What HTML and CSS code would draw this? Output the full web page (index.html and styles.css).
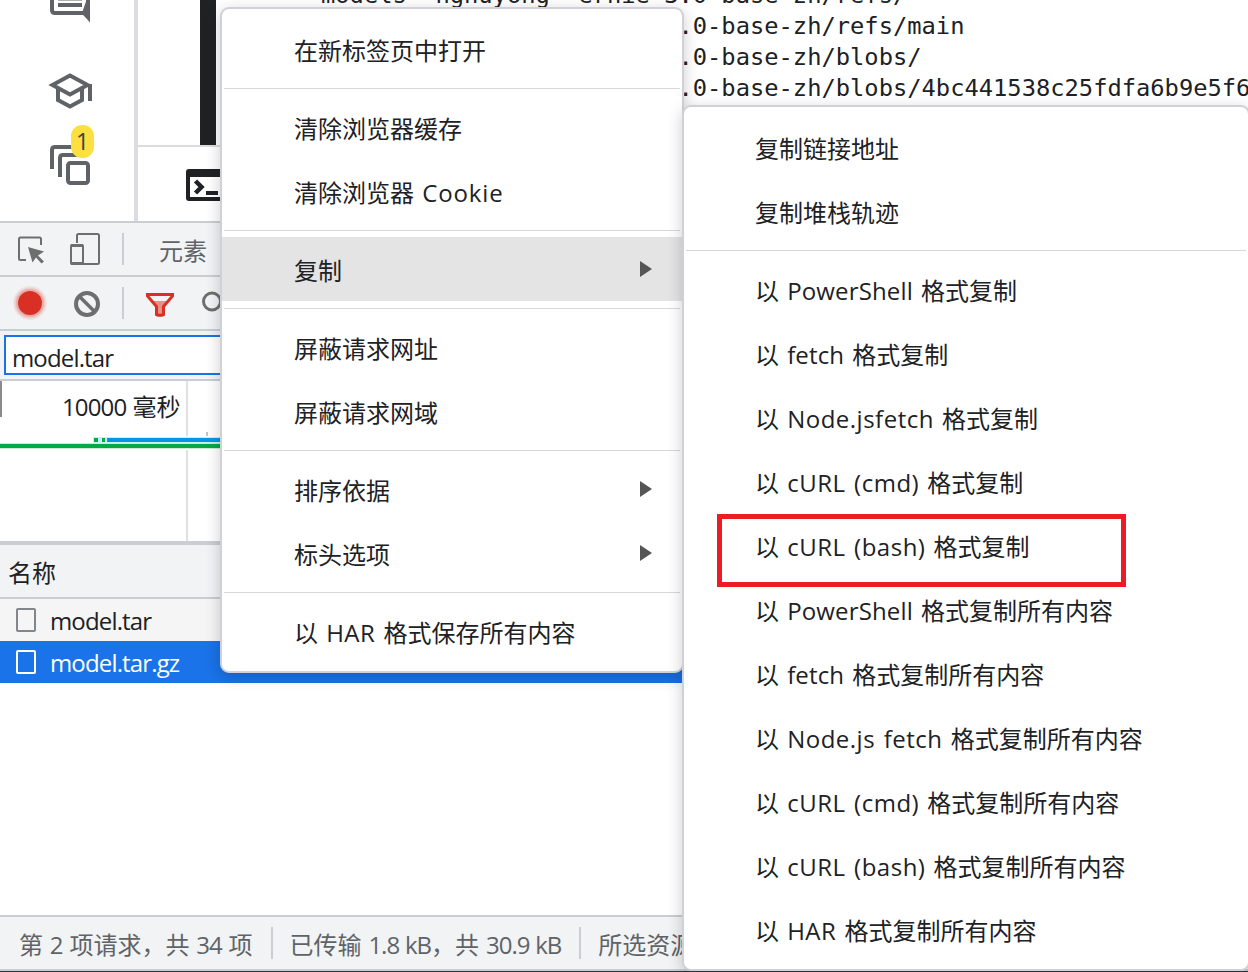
FILE: index.html
```html
<!DOCTYPE html>
<html lang="zh-CN">

<head>
    <meta charset="utf-8">
    <title>DevTools</title>
    <link rel="stylesheet" href="styles.css">
</head>

<body>
    <div class="page">
        <div class="app">
            <div class="sidebar">
                <svg class="side-icons" width="134" height="221" viewBox="0 0 134 221" fill="none" stroke="#5f6368" stroke-width="4">
                    <path d="M52 -10V10q0 3 3 3H84L88 17V-10"></path>
                    <path d="M82 13L90 22.500V-10" fill="#5f6368" stroke="none"></path>
                    <path d="M58 -1.500H82M58 5H82"></path>
                    <path d="M52.500 85L70 75.500L87.500 85L70 94.500Z"></path>
                    <path d="M58 88V100L70 106.500L82 100V88M90 84V101"></path>
                    <path d="M52 169V150q0-3 3-3H74M60 177V158q0-3 3-3H80"></path>
                    <rect x="68" y="163" width="20" height="20" rx="2.500"></rect>
                </svg>
                <span class="badge">1</span>
            </div>
            <div class="main">
                <div class="output">
                    <div class="gutter"></div>
                    <div class="files">
                        <div>models--nghuyong--ernie-3.0-base-zh/refs/</div>
                        <div>models--nghuyong--ernie-3.0-base-zh/refs/main</div>
                        <div>models--nghuyong--ernie-3.0-base-zh/blobs/</div>
                        <div>models--nghuyong--ernie-3.0-base-zh/blobs/4bc441538c25fdfa6b9e5f6</div>
                    </div>
                </div>
                <div class="prompt">
                    <svg width="44" height="32" viewBox="0 0 44 32">
                        <path d="M3 0H41a3 3 0 0 1 3 3V29a3 3 0 0 1-3 3H3a3 3 0 0 1-3-3V3a3 3 0 0 1 3-3ZM4 8V28H40V8Z" fill="#202124" fill-rule="evenodd"></path>
                        <path d="M9.500 12L15.500 18L9.500 24" fill="none" stroke="#202124" stroke-width="4.500"></path>
                        <rect x="20" y="22" width="12" height="4" fill="#202124"></rect>
                    </svg>
                </div>
            </div>
        </div>

        <div class="toolbar">
            <svg width="220" height="52" viewBox="0 0 220 52" fill="none" stroke="#6e6e6e" stroke-width="2">
                <path d="M26 37H20.500q-1.500 0-1.500-1.500V16q0-1.500 1.500-1.500H39.500q1.500 0 1.500 1.500V22"></path>
                <path d="M28 24L44 28.500L38 32.500L44 38.500L41.500 40.500L36 34.500L32.500 39.500Z" fill="#6e6e6e" stroke="none"></path>
                <path d="M77 20V12.500q0-1.500 1.500-1.500H97.500q1.500 0 1.500 1.500V39.500q0 1.500-1.500 1.500H83"></path>
                <rect x="71" y="22" width="12" height="19" rx="1"></rect>
                <path d="M71 22.500H83M71 40.500H83" stroke-width="3"></path>
                <path d="M123 10V42" stroke="#cacdd1"></path>
            </svg>
            <span class="tab">元素</span>
        </div>
        <div class="toolbar">
            <svg width="240" height="52" viewBox="0 0 240 52" fill="none">
                <circle cx="30" cy="26" r="17" fill="#d93025" opacity=".08"></circle>
                <circle cx="30" cy="26" r="15.500" fill="#d93025" opacity=".12"></circle>
                <circle cx="30" cy="26" r="14" fill="#d93025" opacity=".2"></circle>
                <circle cx="30" cy="26" r="12" fill="#d93025"></circle>
                <circle cx="87" cy="27" r="11" stroke="#6e6e6e" stroke-width="4"></circle>
                <path d="M79 19L95 35" stroke="#6e6e6e" stroke-width="3.600"></path>
                <path d="M123 10V42" stroke="#cacdd1" stroke-width="2"></path>
                <path d="M151 24H169L164 30V38H156V30Z" fill="#e88f89"></path>
                <path d="M147.500 17.500H172.500V19L163.500 29.500V37.500q-3.500 1.500-7 0V29.500L147.500 19Z" stroke="#d93025" stroke-width="3"></path>
                <circle cx="212" cy="24.500" r="8.500" stroke="#6e6e6e" stroke-width="3"></circle>
            </svg>
        </div>
        <div class="filter-bar">
            <div class="filter-input"><span class="narrow">model.tar</span></div>
        </div>
        <div class="overview">
            <svg class="chart" width="240" height="160" viewBox="0 0 240 160">
                <rect width="2" height="36" fill="#8a8a8a"></rect>
                <path d="M187 0V55M187 69V160" stroke="#e0e0e0" stroke-width="2"></path>
                <rect x="206" y="51" width="2" height="4" fill="#c4c4c4"></rect>
                <path d="M93 59H240" stroke="#ccecf8" stroke-width="6"></path>
                <path d="M107 59H240" stroke="#0098e3" stroke-width="4"></path>
                <path d="M94 59H98M102 59H105" stroke="#00aa46" stroke-width="4"></path>
                <path d="M0 65H240" stroke="#c8eed7" stroke-width="6"></path>
                <path d="M0 65H240" stroke="#00aa46" stroke-width="4"></path>
            </svg>
            <span class="tick"><span class="narrow">10000</span> 毫秒</span>
        </div>
        <div class="name-header">名称</div>
        <div class="request">
            <span class="file-icon"></span>
            <span class="narrow">model.tar</span>
        </div>
        <div class="request selected">
            <span class="file-icon"></span>
            <span class="narrow">model.tar.gz</span>
        </div>
        <div class="filler"></div>
        <div class="status">
            <div class="cell">第 <span class="narrow">2</span> 项请求，共 <span class="narrow">34</span> 项</div>
            <div class="cell">已传输 <span class="narrow">1.8 kB</span>，共 <span class="narrow">30.9 kB</span></div>
            <div class="cell">所选资源</div>
        </div>

        <div class="menu context-menu">
            <div class="item">在新标签页中打开</div>
            <div class="separator"></div>
            <div class="item">清除浏览器缓存</div>
            <div class="item">清除浏览器 <span class="latin wide">Cookie</span></div>
            <div class="separator"></div>
            <div class="item parent active">复制</div>
            <div class="separator"></div>
            <div class="item">屏蔽请求网址</div>
            <div class="item">屏蔽请求网域</div>
            <div class="separator"></div>
            <div class="item parent">排序依据</div>
            <div class="item parent">标头选项</div>
            <div class="separator"></div>
            <div class="item">以 <span class="latin">HAR</span> 格式保存所有内容</div>
        </div>

        <div class="menu submenu">
            <div class="item">复制链接地址</div>
            <div class="item">复制堆栈轨迹</div>
            <div class="separator"></div>
            <div class="item">以 <span class="latin tight">PowerShell</span> 格式复制</div>
            <div class="item">以 <span class="latin tight">fetch</span> 格式复制</div>
            <div class="item">以 <span class="latin">Node.jsfetch</span> 格式复制</div>
            <div class="item">以 <span class="latin">cURL (cmd)</span> 格式复制</div>
            <div class="item marked">以 <span class="latin">cURL (bash)</span> 格式复制</div>
            <div class="item">以 <span class="latin tight">PowerShell</span> 格式复制所有内容</div>
            <div class="item">以 <span class="latin tight">fetch</span> 格式复制所有内容</div>
            <div class="item">以 <span class="latin">Node.js fetch</span> 格式复制所有内容</div>
            <div class="item">以 <span class="latin">cURL (cmd)</span> 格式复制所有内容</div>
            <div class="item">以 <span class="latin">cURL (bash)</span> 格式复制所有内容</div>
            <div class="item">以 <span class="latin">HAR</span> 格式复制所有内容</div>
        </div>
    </div>
</body>

</html>
```
FILE: styles.css
```css
*,
*::after {
    box-sizing: border-box;
}

body {
    margin: 0;
    font-family: "Open Sans", "Noto Sans CJK SC", sans-serif;
    font-size: 24px;
    color: #202124;
    background-color: #ffffff;
}

svg {
    display: block;
    flex: none;
}

.page {
    position: relative;
    display: flex;
    flex-direction: column;
    width: 1248px;
    height: 972px;
    overflow: hidden;
    white-space: nowrap;
    border-bottom: 1px solid #24343a;
}

/* page above the devtools panel */
.app {
    display: flex;
    height: 223px;
    flex: none;
    border-bottom: 2px solid #cacdd1;
}

.sidebar {
    position: relative;
    width: 138px;
    border-right: 4px solid #dadce0;
}

.badge {
    position: absolute;
    left: 71px;
    top: 125px;
    width: 23px;
    height: 33px;
    border-radius: 11px;
    background-color: #fbe040;
    color: #3c4043;
    font-size: 23px;
    line-height: 33px;
    text-align: center;
}

.main {
    flex: 1;
}

.output {
    display: flex;
    height: 147px;
    padding-left: 62px;
    border-bottom: 2px solid #dadce0;
    overflow: hidden;
}

.gutter {
    width: 16px;
    background-color: #202124;
}

.files {
    margin: -20px 0 0 105px;
    font-family: "DejaVu Sans Mono", monospace;
    font-size: 23.75px;
    line-height: 31px;
}

.prompt {
    padding: 22px 0 0 48px;
}

/* devtools panel */
.narrow {
    letter-spacing: -0.85px;
}

.toolbar {
    display: flex;
    align-items: center;
    height: 54px;
    flex: none;
    background-color: #f1f3f4;
    border-bottom: 2px solid #cacdd1;
}

.tab {
    margin-left: -61px;
    color: #5f6368;
}

.filter-bar {
    height: 50px;
    flex: none;
    padding: 4px 0 4px 4px;
    background-color: #f1f3f4;
    border-bottom: 2px solid #cacdd1;
}

.filter-input {
    height: 40px;
    padding-left: 6px;
    border: 2px solid #1a73e8;
    background-color: #ffffff;
    line-height: 42px;
}

.overview {
    display: flex;
    height: 164px;
    flex: none;
    border-bottom: 4px solid #cacdd1;
}

.tick {
    width: 120px;
    margin-left: -178px;
    padding-right: 2px;
    text-align: right;
    line-height: 51px;
}

.name-header {
    height: 54px;
    flex: none;
    padding-left: 8px;
    background-color: #f1f3f4;
    border-bottom: 2px solid #cacdd1;
    line-height: 56px;
}

.request {
    display: flex;
    height: 42px;
    flex: none;
    padding-left: 16px;
    background-color: #f5f5f5;
    line-height: 44px;
}

.request.selected {
    background-color: #1a73e8;
    color: #ffffff;
}

.file-icon {
    width: 20px;
    height: 24px;
    margin: 9px 14px 0 0;
    border: 2px solid #80868b;
    border-radius: 2px;
}

.selected .file-icon {
    border-color: #ffffff;
}

.filler {
    flex: 1;
}

.status {
    display: flex;
    align-items: center;
    height: 56px;
    flex: none;
    padding: 0 0 0 19px;
    background-color: #f1f3f4;
    border-top: 2px solid #cacdd1;
    border-bottom: 2px solid #cacdd1;
    color: #5f6368;
    line-height: 32px;
    word-spacing: 0.6px;
}

.cell {
    height: 32px;
    line-height: 35px;
}

.cell + .cell {
    margin-left: 18px;
    padding-left: 17px;
    border-left: 2px solid #cacdd1;
}

.cell .narrow {
    letter-spacing: -1px;
}

/* menus */
.menu {
    position: absolute;
    padding: 8px 0;
    background-color: #ffffff;
    border: 2px solid #d0d1d8;
    border-radius: 9px;
    box-shadow: 0 4px 16px rgba(0, 0, 0, 0.2);
}

.context-menu {
    left: 220px;
    top: 7px;
    width: 464px;
}

.submenu {
    left: 682px;
    top: 105px;
    width: 568px;
}

.item {
    position: relative;
    height: 64px;
    padding-left: 71px;
    line-height: 67px;
    word-spacing: 1.9px;
}

.context-menu .item {
    padding-left: 72px;
}

.latin {
    letter-spacing: 0.5px;
}

.latin.tight {
    letter-spacing: 0.15px;
}

.latin.wide {
    letter-spacing: 0.9px;
}

.item.active {
    background-color: #e4e4e4;
}

.item.parent::after {
    content: "";
    position: absolute;
    left: 418px;
    top: 24px;
    border: 8px solid transparent;
    border-left: 12px solid #555555;
    border-right: 0;
}

.item.marked::after {
    content: "";
    position: absolute;
    left: 33px;
    top: 1px;
    width: 409px;
    height: 73px;
    border: 5px solid #ed1c24;
}

.separator {
    height: 1px;
    margin: 7px 2px 6px;
    background-color: #d6d7d9;
}
```
